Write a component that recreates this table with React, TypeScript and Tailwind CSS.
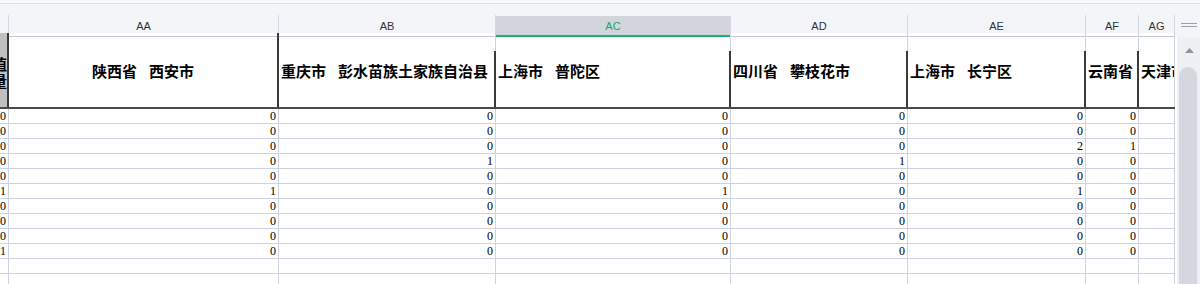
import React from "react";

const cols = ["", "AA", "AB", "AC", "AD", "AE", "AF", "AG"];

type Head = { prov: string; city?: string; center?: boolean };

const heads: Head[] = [
  { prov: "陕西省", city: "西安市", center: true },
  { prov: "重庆市", city: "彭水苗族土家族自治县" },
  { prov: "上海市", city: "普陀区" },
  { prov: "四川省", city: "攀枝花市" },
  { prov: "上海市", city: "长宁区" },
  { prov: "云南省" },
  { prov: "天津市" },
];

// first value is the partly scrolled-out column on the left
const rows: number[][] = [
  [0, 0, 0, 0, 0, 0, 0],
  [0, 0, 0, 0, 0, 0, 0],
  [0, 0, 0, 0, 0, 2, 1],
  [0, 0, 1, 0, 1, 0, 0],
  [0, 0, 0, 0, 0, 0, 0],
  [1, 1, 0, 1, 0, 1, 0],
  [0, 0, 0, 0, 0, 0, 0],
  [0, 0, 0, 0, 0, 0, 0],
  [0, 0, 0, 0, 0, 0, 0],
  [1, 0, 0, 0, 0, 0, 0],
];

const gridCols = "grid shrink-0 grid-cols-[9px_270px_217px_235px_177px_178px_53px_36px]";
const cjk = "font-['Noto_Sans_CJK_SC','Noto_Sans',sans-serif]";

function HeadCell({ h, idx }: { h: Head; idx: number }) {
  const fullDark = idx === 0;
  const last = idx === heads.length - 1;
  return (
    <div className="flex h-[74px] min-w-0">
      <div
        className={`flex min-w-0 flex-1 items-center overflow-hidden whitespace-nowrap pt-[3px] text-[15px] font-bold text-black ${cjk} ${
          h.center ? "justify-center" : "pl-[2px]"
        }`}
      >
        <span>{h.prov}</span>
        {h.city && (
          <>
            <span className="inline-block w-[12px]"></span>
            <span>{h.city}</span>
          </>
        )}
      </div>
      {last ? (
        <div className="w-px bg-[#cdd3e3]" />
      ) : fullDark ? (
        <div className="w-[2px] bg-[#3a3a3a]" />
      ) : (
        <div className="flex w-[2px] flex-col">
          <div className="ml-[1px] h-[18px] w-px bg-[#cdd3e3]" />
          <div className="flex-1 bg-[#3a3a3a]" />
        </div>
      )}
    </div>
  );
}

export default function App() {
  return (
    <div className="flex h-[284px] w-[1200px] overflow-hidden bg-white">
      {/* sheet area */}
      <div className="flex w-[1175px] shrink-0 flex-col overflow-hidden">
        <div className="h-[4px] shrink-0 border-b border-[#dde0e6] bg-[#f9fafb]" />
        <div className="h-[11px] shrink-0 bg-[#f3f5f9]" />
        {/* column letters */}
        <div className={`${gridCols} h-[18px] bg-[#f3f5f9]`}>
          {cols.map((c, i) => (
            <div
              key={i}
              className={`flex items-center justify-center border-r border-[#d3d8e3] pt-[2px] font-['Liberation_Sans','DejaVu_Sans',sans-serif] text-[11px] ${
                c === "AC"
                  ? "mt-[1px] border-b-2 border-b-[#1fb26b] bg-[#d2d5dc] text-[#1aa463]"
                  : "border-b border-b-[#c3c8d3] text-[#333]"
              }`}
            >
              {c}
            </div>
          ))}
        </div>
        {/* header row */}
        <div className={`${gridCols} border-b-2 border-[#4a4a4a]`}>
          <div className="flex h-[74px]">
            <div
              className={`flex w-[7px] flex-col items-end justify-center overflow-hidden bg-[#c0c0c0] pt-[3px] text-[15px] font-bold leading-[17px] text-black ${cjk}`}
            >
              <span className="whitespace-nowrap">数值</span>
              <span className="whitespace-nowrap">总量</span>
            </div>
            <div className="w-[2px] bg-[#3a3a3a]" />
          </div>
          {heads.map((h, i) => (
            <HeadCell key={i} h={h} idx={i} />
          ))}
        </div>
        {/* data rows */}
        {rows.map((r, ri) => (
          <div key={ri} className={`${gridCols} h-[15px]`}>
            {r.map((v, ci) => (
              <div
                key={ci}
                className="overflow-hidden border-r border-b border-[#cdd3e3] pr-[2px] pt-[1px] text-right font-['Liberation_Serif','DejaVu_Serif',serif] text-[12px] leading-[13px] text-black"
              >
                {v}
              </div>
            ))}
            <div className="border-r border-b border-[#cdd3e3]" />
          </div>
        ))}
        {[0, 1].map((k) => (
          <div key={k} className={`${gridCols} h-[15px]`}>
            {cols.map((_, ci) => (
              <div key={ci} className="border-r border-b border-[#cdd3e3]" />
            ))}
          </div>
        ))}
      </div>
      {/* vertical scrollbar */}
      <div className="flex w-[25px] shrink-0 flex-col">
        <div className="h-[4px] shrink-0 border-b border-[#dde0e6] bg-[#f9fafb]" />
        <div className="flex h-[33px] shrink-0 flex-col items-center bg-[#f3f5f9] pt-[19px]">
          <div className="ml-[2px] h-px w-[16px] bg-[#9aa0aa]" />
          <div className="ml-[2px] mt-[2px] h-px w-[16px] bg-[#9aa0aa]" />
        </div>
        <div className="flex flex-1 flex-col border-l-2 border-white bg-[#eef0f4]">
          <div className="flex h-[30px] shrink-0 justify-center pl-[2px] pt-[11px]">
            <svg width="9" height="5" viewBox="0 0 9 5">
              <path d="M4.5 0 L9 5 L0 5 Z" fill="#8f949c" />
            </svg>
          </div>
          <div className="ml-[2px] w-[18px] flex-1 rounded-t-full bg-[#d4d7de]" />
        </div>
      </div>
    </div>
  );
}
